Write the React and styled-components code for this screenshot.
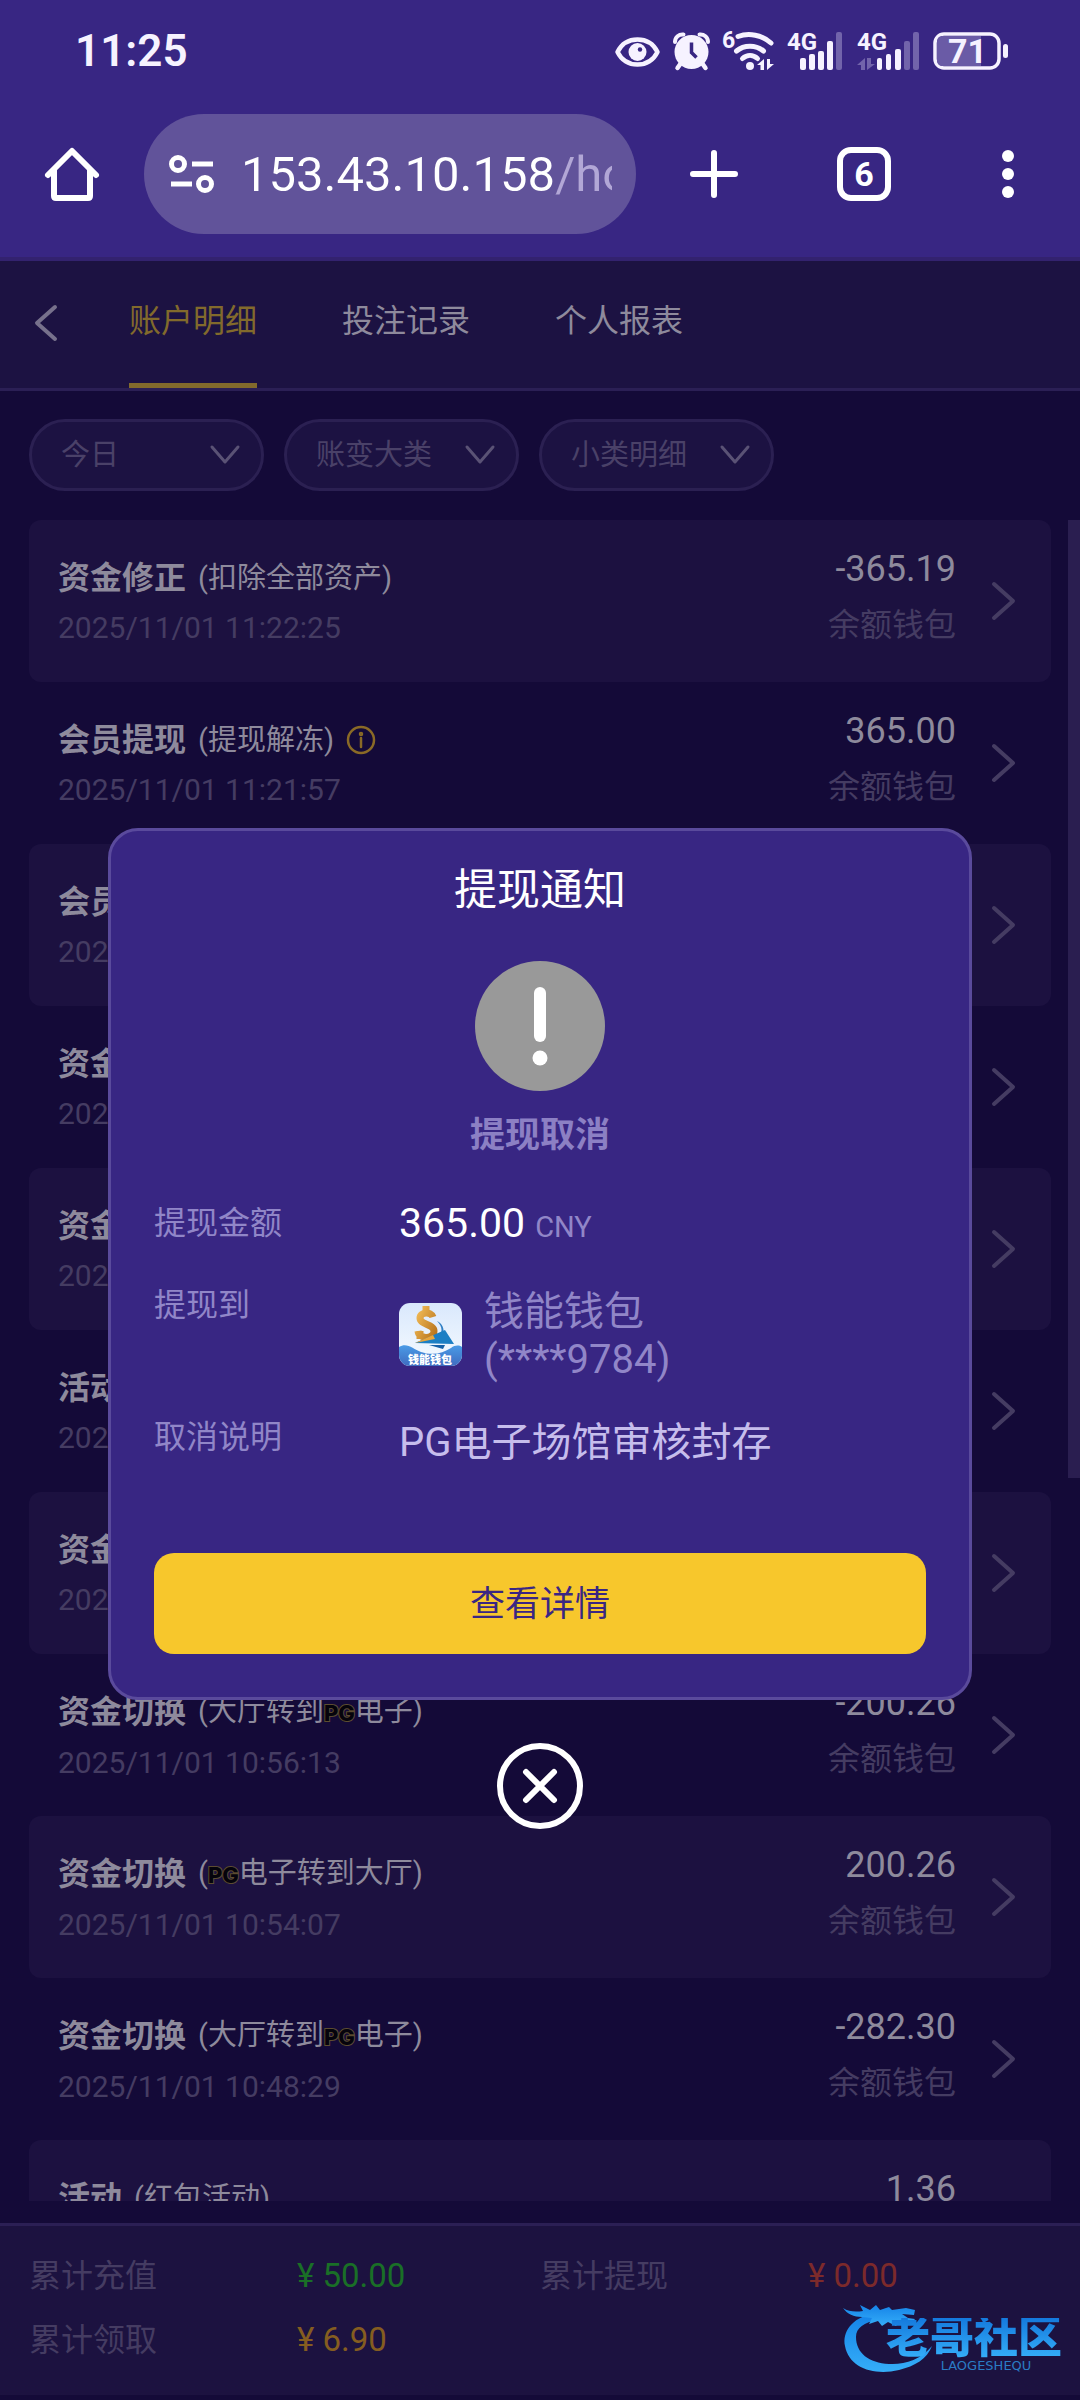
import { useState } from "react";
import styled, { createGlobalStyle } from "styled-components";

const Brand = styled.b`
  font-family: Inter, sans-serif;
  font-size: 22px;
  font-weight: 800;
  color: #05030c;
  -webkit-text-stroke: 2px #5c4c30;
  paint-order: stroke fill;
`;

const records = [
  {
    id: 1,
    title: "资金修正",
    note: "(扣除全部资产)",
    date: "2025/11/01 11:22:25",
    amount: "-365.19",
  },
  {
    id: 2,
    title: "会员提现",
    note: "(提现解冻)",
    info: true,
    date: "2025/11/01 11:21:57",
    amount: "365.00",
  },
  { id: 3, title: "会员提现", date: "2025/11/01" },
  { id: 4, title: "资金切换", date: "2025/11/01" },
  { id: 5, title: "资金切换", date: "2025/11/01" },
  { id: 6, title: "活动", date: "2025/11/01" },
  { id: 7, title: "资金切换", date: "2025/11/01" },
  {
    id: 8,
    title: "资金切换",
    note: (
      <>
        (大厅转到<Brand>PG</Brand>电子)
      </>
    ),
    date: "2025/11/01 10:56:13",
    amount: "-200.26",
  },
  {
    id: 9,
    title: "资金切换",
    note: (
      <>
        (<Brand>PG</Brand>电子转到大厅)
      </>
    ),
    date: "2025/11/01 10:54:07",
    amount: "200.26",
  },
  {
    id: 10,
    title: "资金切换",
    note: (
      <>
        (大厅转到<Brand>PG</Brand>电子)
      </>
    ),
    date: "2025/11/01 10:48:29",
    amount: "-282.30",
  },
  {
    id: 11,
    title: "活动",
    note: "(红包活动)",
    date: "2025/11/01",
    amount: "1.36",
  },
];

const tabs = ["账户明细", "投注记录", "个人报表"];
const filters = [
  { label: "时间", value: "今日" },
  { label: "大类", value: "账变大类" },
  { label: "小类", value: "小类明细" },
];

const StatusIcons = () => (
  <IconRow>
    <svg width="45" height="38" viewBox="0 0 45 38" fill="none">
      <path
        d="M2.5 20C7 11 14 7.500 22.500 7.500S38 11 42.500 20C38 29 31 32.500 22.500 32.500S7 29 2.500 20Z"
        stroke="#f6f2ff"
        strokeWidth="4.500"
        strokeLinejoin="round"
      />
      <circle cx="22.500" cy="20" r="9" fill="#f6f2ff" />
      <circle cx="25" cy="17.500" r="2.200" fill="#382683" />
    </svg>
    <svg width="37" height="38" viewBox="0 0 37 38" fill="none">
      <circle cx="18.500" cy="20" r="17" fill="#f6f2ff" />
      <path
        d="M2 10C2 5 6 2 10.500 2.500M35 10C35 5 31 2 26.500 2.500"
        stroke="#f6f2ff"
        strokeWidth="4"
        strokeLinecap="round"
      />
      <path
        d="M8 31L4.500 36M29 31L32.500 36"
        stroke="#f6f2ff"
        strokeWidth="4.500"
        strokeLinecap="round"
      />
      <path d="M18.500 10.500V20.500L23.500 25.500" stroke="#382683" strokeWidth="3.500" />
    </svg>
    <svg width="51" height="40" viewBox="0 0 51 40" fill="none">
      <SvgText x="-1" y="17" $size={23}>
        6
      </SvgText>
      <g stroke="#f6f2ff" strokeWidth="5" strokeLinecap="round">
        <path d="M15 5.500C26 1.500 39 4 48 12" />
        <path d="M13.500 20C21 13.500 33 13.500 40.500 20" />
        <path d="M19.500 27.500C24 23.500 30 23.500 34.500 27.500" />
      </g>
      <circle cx="27" cy="35" r="4" fill="#f6f2ff" />
      <path d="M41 28V39H37.500V34H34ZM44 39V28H47V33H51Z" fill="#f6f2ff" />
    </svg>
    <svg width="57" height="38" viewBox="0 0 57 38">
      <SvgText x="0" y="18" $size={24}>
        4G
      </SvgText>
      <g fill="#f6f2ff">
        <rect x="13" y="26" width="6" height="12" rx="2" />
        <rect x="22" y="22" width="6" height="16" rx="2" />
        <rect x="31" y="19" width="6" height="19" rx="2" />
        <rect x="40" y="9" width="6" height="29" rx="2" />
        <rect x="49" y="0" width="6" height="38" rx="2" fill="#7264ab" />
      </g>
    </svg>
    <svg width="63" height="38" viewBox="0 0 63 38">
      <SvgText x="0" y="18" $size={24}>
        4G
      </SvgText>
      <path d="M8 26V38H4V33H0ZM10 38V26H14V32H18Z" fill="#7264ab" />
      <g fill="#f6f2ff">
        <rect x="20" y="26" width="5" height="12" rx="2" />
        <rect x="29" y="22" width="5" height="16" rx="2" />
        <rect x="38" y="17" width="6" height="21" rx="2" />
        <rect x="47" y="9" width="6" height="29" rx="2" fill="#7264ab" />
        <rect x="56" y="0" width="6" height="38" rx="2" fill="#7264ab" />
      </g>
    </svg>
    <svg width="76" height="38" viewBox="0 0 76 38" fill="none">
      <rect x="2" y="2" width="64" height="34" rx="9" stroke="#f6f2ff" strokeWidth="3.500" />
      <path d="M10 4H48V34H10C6 34 4 32 4 28V10C4 6 6 4 10 4Z" fill="#6a5ba6" />
      <rect x="70" y="12" width="5" height="14" rx="2.500" fill="#f6f2ff" />
      <SvgText x="15" y="31" $size={34}>
        71
      </SvgText>
    </svg>
  </IconRow>
);

const WalletIcon = () => (
  <svg width="63" height="63" viewBox="0 0 63 63" aria-hidden="true">
    <defs>
      <linearGradient id="sky" x1="0" y1="0" x2="0" y2="1">
        <stop offset="0" stopColor="#d9e8fc" />
        <stop offset="1" stopColor="#f6fbff" />
      </linearGradient>
      <linearGradient id="sea" x1="0" y1="0" x2="0" y2="1">
        <stop offset="0" stopColor="#4a9be6" />
        <stop offset="1" stopColor="#3f6cc0" />
      </linearGradient>
      <linearGradient id="gold" x1="0" y1="0" x2="1" y2="1">
        <stop offset="0" stopColor="#f3bd58" />
        <stop offset="1" stopColor="#b8741c" />
      </linearGradient>
      <clipPath id="tile">
        <rect width="63" height="63" rx="11" />
      </clipPath>
    </defs>
    <g clipPath="url(#tile)">
      <rect width="63" height="63" fill="url(#sky)" />
      <path d="M38 18C44 24 44 30 38 36L44 32C46 26 43 20 38 18Z" fill="#2f7fc4" />
      <path
        d="M34 14C32 8 21 9 21 15C21 22 35 21 35 28C35 36 20 37 19 28M27 3V10M21 28V36M30 31V36"
        fill="none"
        stroke="url(#gold)"
        strokeWidth="7"
      />
      <path d="M16 40L46 27L55 41Z" fill="#1c7fc4" />
      <path d="M16 40L34 32L36 36Z" fill="#e9a63c" />
      <path d="M30 42H46L44 46Z" fill="#1560a8" />
      <path d="M0 44C8 39 14 46 22 49C34 53 44 50 52 45C56 42 60 42 63 44V63H0Z" fill="url(#sea)" />
      <IconLabel x="31" y="61">
        钱能钱包
      </IconLabel>
    </g>
  </svg>
);

const Dragon = () => (
  <svg width="92" height="70" viewBox="0 0 92 70" aria-hidden="true">
    <defs>
      <linearGradient id="dragon" x1="0" y1="0" x2="0" y2="1">
        <stop offset="0" stopColor="#1583e8" />
        <stop offset="1" stopColor="#35aef8" />
      </linearGradient>
    </defs>
    <g fill="url(#dragon)">
      <path d="M30 10C10 14 0 28 3 42C7 64 32 72 57 66C73 62 85 55 90 42C78 56 62 61 47 60C27 59 14 49 14 33C14 24 22 18 36 16Z" />
      <path d="M1 4C7 8 14 8 21 7L18 1L28 6L34 1L38 6L47 3L50 6L64 4L73 6L72 11L60 10L66 14L73 15L70 19L58 17L54 22L46 18L40 22L36 17L27 20L30 14L20 13C12 13 5 10 1 4Z" />
    </g>
  </svg>
);

const App = () => {
  const [active, setActive] = useState(tabs[0]);
  const [open, setOpen] = useState(true);

  return (
    <Page>
      <GlobalStyle />
      <BrowserHeader>
        <StatusBar>
          <Clock>11:25</Clock>
          <StatusIcons />
        </StatusBar>
        <Toolbar>
          <ToolButton aria-label="Home">
            <svg width="54" height="54" viewBox="0 0 54 54" fill="none" stroke="#fff" strokeWidth="6">
              <path d="M3 28L27 4L51 28" strokeLinecap="round" strokeLinejoin="round" />
              <path d="M9 23V49Q9 51 11 51H43Q45 51 45 49V23" />
            </svg>
          </ToolButton>
          <AddressBar>
            <svg width="46" height="38" viewBox="0 0 46 38" fill="none" stroke="#fff" strokeWidth="5">
              <circle cx="9" cy="9" r="6.500" />
              <path d="M23 9H44M2 29H23" />
              <circle cx="36" cy="29" r="6.500" />
            </svg>
            <AddressInput
              type="text"
              aria-label="Address"
              defaultValue="153.43.10.158/home"
            />
          </AddressBar>
          <ToolButton $wide aria-label="New tab">
            <svg width="48" height="48" viewBox="0 0 48 48" stroke="#fff" strokeWidth="6" strokeLinecap="round">
              <path d="M24 3V45M3 24H45" />
            </svg>
          </ToolButton>
          <ToolButton aria-label="Tabs">
            <TabCount>6</TabCount>
          </ToolButton>
          <ToolButton aria-label="Menu">
            <svg width="12" height="48" viewBox="0 0 12 48" fill="#fff">
              <circle cx="6" cy="6" r="6" />
              <circle cx="6" cy="24" r="6" />
              <circle cx="6" cy="42" r="6" />
            </svg>
          </ToolButton>
        </Toolbar>
      </BrowserHeader>

      <Content>
        <Nav>
          <BackButton aria-label="返回">
            <svg width="28" height="36" viewBox="0 0 28 36" fill="none" stroke="#77718c" strokeWidth="4">
              <path d="M26 2L8 18L26 34" strokeLinecap="round" strokeLinejoin="round" />
            </svg>
          </BackButton>
          {tabs.map((tab) => (
            <Tab key={tab} $active={tab === active} onClick={() => setActive(tab)}>
              {tab}
            </Tab>
          ))}
        </Nav>

        <Filters>
          {filters.map((filter) => (
            <FilterBox key={filter.label}>
              <FilterSelect aria-label={filter.label}>
                <option>{filter.value}</option>
              </FilterSelect>
              <svg width="30" height="20" viewBox="0 0 30 20" fill="none" stroke="#5a5275" strokeWidth="3">
                <path d="M2 2L15 17L28 2" strokeLinecap="round" strokeLinejoin="round" />
              </svg>
            </FilterBox>
          ))}
        </Filters>

        <ListArea>
          <List>
            {records.map((record) => (
              <Row key={record.id}>
                <RowMain>
                  <RowTitle>
                    <strong>{record.title}</strong>
                    {record.note && <Note>{record.note}</Note>}
                    {record.info && (
                      <svg width="30" height="30" viewBox="0 0 30 30" fill="none" stroke="#8a6a26" strokeWidth="2.500">
                        <circle cx="15" cy="15" r="13" />
                        <path d="M15 13V22" strokeLinecap="round" />
                        <circle cx="15" cy="9" r="1" />
                      </svg>
                    )}
                  </RowTitle>
                  <RowDate>{record.date}</RowDate>
                </RowMain>
                {record.amount && (
                  <RowSide>
                    <Amount>{record.amount}</Amount>
                    <Wallet>余额钱包</Wallet>
                  </RowSide>
                )}
                <svg width="24" height="38" viewBox="0 0 24 38" fill="none" stroke="#453c62" strokeWidth="4">
                  <path d="M2 2L21 19L2 36" strokeLinecap="round" strokeLinejoin="round" />
                </svg>
              </Row>
            ))}
          </List>
          <ScrollThumb />
        </ListArea>

        <Summary>
          <SummaryItem>
            <dt>累计充值</dt>
            <SummaryValue $color="#1a6f27">¥ 50.00</SummaryValue>
          </SummaryItem>
          <SummaryItem>
            <dt>累计提现</dt>
            <SummaryValue $color="#7c2a2b">¥ 0.00</SummaryValue>
          </SummaryItem>
          <SummaryItem>
            <dt>累计领取</dt>
            <SummaryValue $color="#855d20">¥ 6.90</SummaryValue>
          </SummaryItem>
        </Summary>

        {open && (
          <Overlay>
            <Modal role="dialog" aria-labelledby="notice-title">
              <ModalTitle id="notice-title">提现通知</ModalTitle>
              <svg width="130" height="130" viewBox="0 0 130 130">
                <circle cx="65" cy="65" r="65" fill="#999" />
                <rect x="59" y="26" width="12" height="55" rx="6" fill="#fff" />
                <circle cx="65" cy="97" r="7.500" fill="#fff" />
              </svg>
              <ModalStatus>提现取消</ModalStatus>
              <Details>
                <DetailRow>
                  <dt>提现金额</dt>
                  <Money>
                    365.00 <Currency>CNY</Currency>
                  </Money>
                </DetailRow>
                <DetailRow>
                  <dt>提现到</dt>
                  <Account>
                    <WalletIcon />
                    <AccountName>
                      钱能钱包
                      <br />
                      (****9784)
                    </AccountName>
                  </Account>
                </DetailRow>
                <DetailRow>
                  <dt>取消说明</dt>
                  <Reason>PG电子场馆审核封存</Reason>
                </DetailRow>
              </Details>
              <DetailButton>查看详情</DetailButton>
            </Modal>
            <CloseButton aria-label="关闭" onClick={() => setOpen(false)}>
              <svg width="40" height="40" viewBox="0 0 40 40" stroke="#fff" strokeWidth="6" strokeLinecap="round">
                <path d="M6 6L34 34M34 6L6 34" />
              </svg>
            </CloseButton>
          </Overlay>
        )}

        <Watermark>
          <Dragon />
          <WatermarkText>
            <WatermarkName>老哥社区</WatermarkName>
            <WatermarkLatin>LAOGESHEQU</WatermarkLatin>
          </WatermarkText>
        </Watermark>
      </Content>
    </Page>
  );
};

export default App;

const GlobalStyle = createGlobalStyle`
  * {
    box-sizing: border-box;
  }
  body {
    margin: 0;
    background: #140a38;
    font-family: Roboto, "Noto Sans CJK SC", sans-serif;
  }
  button, input, select {
    font-family: inherit;
    border: 0;
    padding: 0;
    background: none;
  }
  svg {
    display: block;
    flex-shrink: 0;
    overflow: visible;
  }
  dl, dd, ul, h2, p {
    margin: 0;
    padding: 0;
  }
`;

const Page = styled.div`
  display: flex;
  flex-direction: column;
  height: 100vh;
  padding-bottom: 5px;
  overflow: hidden;
`;

const BrowserHeader = styled.header`
  background: #382683;
  border-bottom: 4px solid #33226f;
`;

const StatusBar = styled.div`
  display: flex;
  align-items: center;
  justify-content: space-between;
  height: 102px;
  padding: 0 71px 0 75px;
`;

const Clock = styled.span`
  font-size: 44px;
  font-weight: 600;
  color: #f6f2ff;
`;

const IconRow = styled.div`
  display: flex;
  align-items: center;
  gap: 13px;
`;

const SvgText = styled.text`
  font-size: ${({ $size }) => $size}px;
  font-weight: 700;
  fill: #f6f2ff;
`;

const IconLabel = styled.text`
  font-size: 11px;
  font-weight: 900;
  fill: #fff;
  text-anchor: middle;
`;

const Toolbar = styled.div`
  display: flex;
  align-items: center;
  padding: 12px 0 23px;
`;

const ToolButton = styled.button`
  display: flex;
  align-items: center;
  justify-content: center;
  width: ${({ $wide }) => ($wide ? 156 : 144)}px;
  height: 120px;
`;

const AddressBar = styled.label`
  display: flex;
  flex: 1;
  align-items: center;
  gap: 26px;
  min-width: 0;
  height: 120px;
  padding: 0 24px 0 25px;
  border-radius: 60px;
  background: #61539a;
`;

const AddressInput = styled.input`
  flex: 1;
  min-width: 0;
  font-size: 49px;
  color: transparent;
  background: linear-gradient(90deg, #fff 315px, #b2a7d6 315px);
  background-clip: text;
  outline: none;
`;

const TabCount = styled.span`
  display: flex;
  align-items: center;
  justify-content: center;
  width: 54px;
  height: 54px;
  border: 6px solid #fff;
  border-radius: 14px;
  font-size: 34px;
  font-weight: 700;
  color: #fff;
`;

const Content = styled.main`
  position: relative;
  display: flex;
  flex: 1;
  flex-direction: column;
  min-height: 0;
`;

const Nav = styled.nav`
  display: flex;
  gap: 85px;
  height: 130px;
  padding-left: 29px;
  background: #1c1242;
  border-bottom: 3px solid #2b1f55;
`;

const BackButton = styled.button`
  width: 100px;
  margin-right: -85px;
  padding-bottom: 3px;
`;

const Tab = styled.button`
  padding-bottom: 13px;
  border-top: 5px solid transparent;
  border-bottom: 5px solid ${({ $active }) => ($active ? "#826a2c" : "transparent")};
  font-size: 32px;
  color: ${({ $active }) => ($active ? "#826a2c" : "#8e8a9c")};
`;

const Filters = styled.div`
  display: flex;
  gap: 20px;
  padding: 28px 29px 29px;
`;

const FilterBox = styled.div`
  display: flex;
  align-items: center;
  width: 235px;
  height: 72px;
  padding: 0 21px 0 29px;
  border: 3px solid #2b2052;
  border-radius: 36px;
  background: #1c1242;
`;

const FilterSelect = styled.select`
  flex: 1;
  min-width: 0;
  appearance: none;
  font-size: 29px;
  color: #4a4168;
`;

const ListArea = styled.div`
  display: flex;
  flex: 1;
  gap: 17px;
  min-height: 0;
  margin-bottom: 22px;
  padding-left: 29px;
  overflow: hidden;
`;

const List = styled.ul`
  flex: 1;
  list-style: none;
`;

const Row = styled.li`
  display: flex;
  align-items: center;
  height: 162px;
  padding: 0 35px 0 29px;
  border-radius: 12px;

  &:nth-child(odd) {
    background: #1c1140;
  }
`;

const RowMain = styled.div`
  flex: 1;
  padding-top: 4px;
  line-height: 50px;
`;

const RowTitle = styled.div`
  display: flex;
  align-items: center;
  gap: 12px;
  font-size: 32px;
  color: #8e8a9c;
`;

const Note = styled.span`
  font-size: 29px;
`;

const RowDate = styled.div`
  font-size: 30px;
  color: #453c62;
`;

const RowSide = styled.div`
  align-self: flex-start;
  margin-right: 36px;
  padding-top: 21px;
  line-height: 56px;
  text-align: right;
`;

const Amount = styled.div`
  font-size: 36px;
  color: #8e8a9c;
`;

const Wallet = styled.div`
  font-size: 32px;
  color: #453c62;
`;

const ScrollThumb = styled.div`
  width: 12px;
  height: 57%;
  background: #2a1e50;
`;

const Summary = styled.dl`
  display: grid;
  grid-template-columns: 1fr 1fr;
  padding: 18px 29px 23px;
  border-top: 3px solid #2b1f55;
  background: #1c1240;
`;

const SummaryItem = styled.div`
  display: grid;
  grid-template-columns: 268px 1fr;
  line-height: 64px;
  font-size: 32px;
  color: #453c62;
`;

const SummaryValue = styled.dd`
  font-size: 33px;
  color: ${({ $color }) => $color};
`;

const Overlay = styled.div`
  position: absolute;
  inset: 0;
  display: flex;
  flex-direction: column;
  align-items: center;
  justify-content: center;
  gap: 43px;
`;

const Modal = styled.section`
  display: flex;
  flex-direction: column;
  align-items: center;
  width: 80%;
  padding: 29px 43px 43px;
  border: 3px solid #5a4a9c;
  border-radius: 30px;
  background: #382683;
`;

const ModalTitle = styled.h2`
  margin-bottom: 41px;
  font-size: 43px;
  font-weight: 400;
  line-height: 60px;
  color: #fff;
`;

const ModalStatus = styled.p`
  margin: 21px 0 39px;
  font-size: 35px;
  font-weight: 700;
  line-height: 48px;
  color: #8c80c4;
`;

const Details = styled.dl`
  display: grid;
  gap: 29px;
  width: 100%;
  margin-bottom: 86px;
`;

const DetailRow = styled.div`
  display: grid;
  grid-template-columns: 245px 1fr;
  min-height: 53px;
  font-size: 32px;
  line-height: 48px;
  color: #9186c8;
`;

const Money = styled.dd`
  font-size: 41px;
  color: #fff;
`;

const Currency = styled.span`
  font-size: 29px;
  color: #9186c8;
`;

const Account = styled.dd`
  display: flex;
  align-items: center;
  gap: 22px;
  padding-top: 5px;
  font-size: 40px;
`;

const AccountName = styled.div`
  padding-top: 2px;
`;

const Reason = styled.dd`
  padding-top: 6px;
  font-size: 40px;
  color: #c6bdec;
`;

const DetailButton = styled.button`
  width: 100%;
  height: 101px;
  padding-bottom: 5px;
  border-radius: 20px;
  background: #f7c72c;
  font-size: 35px;
  color: #3a2683;
`;

const CloseButton = styled.button`
  display: flex;
  align-items: center;
  justify-content: center;
  width: 86px;
  height: 86px;
  border: 6px solid #fff;
  border-radius: 50%;
`;

/* sits on top of the summary bar */
const Watermark = styled.div`
  position: absolute;
  right: 18px;
  bottom: 21px;
  display: flex;
  align-items: flex-end;
`;

const WatermarkText = styled.div`
  display: flex;
  flex-direction: column;
  align-items: center;
  margin-left: -48px;
`;

const WatermarkName = styled.span`
  font-size: 44px;
  font-weight: 900;
  line-height: 40px;
  color: transparent;
  background: linear-gradient(#1479dd, #35aef8);
  background-clip: text;
`;

const WatermarkLatin = styled.span`
  margin-left: 24px;
  font-family: "DejaVu Sans", sans-serif;
  font-size: 13px;
  line-height: 16px;
  color: #2a7cc4;
`;
